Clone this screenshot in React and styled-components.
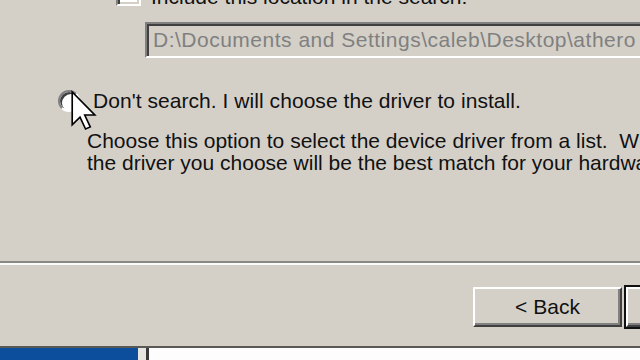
import React from "react";
import styled, { createGlobalStyle } from "styled-components";

const Global = createGlobalStyle`
  html, body { margin: 0; padding: 0; background: #d4d0c8; }
  #root { width: 640px; height: 360px; }
`;

const Page = styled.div`
  position: relative;
  width: 640px;
  height: 360px;
  overflow: hidden;
  display: flex;
  flex-direction: column;
  background: #d4d0c8;
  font-family: "Liberation Sans", Arial, sans-serif;
  font-size: 21px;
  color: #111;
`;

const Dialog = styled.div`
  flex: none;
  height: 346px;
  display: flex;
  flex-direction: column;
  border-bottom: 2px solid #5a5955;
`;

const CheckRow = styled.div`
  display: flex;
  align-items: flex-end;
  gap: 10px;
  height: 25px;
  margin: -19px 0 0 116px;
  white-space: nowrap;
`;

const CheckBox = styled.div`
  flex: none;
  width: 21px;
  height: 21px;
  background: #fff;
  border-top: 2px solid #808080;
  border-left: 2px solid #808080;
  border-right: 2px solid #fff;
  border-bottom: 2px solid #fff;
  box-shadow: inset 2px 2px 0 #404040, inset -2px -2px 0 #d4d0c8;
`;

const CheckLabel = styled.span`
  line-height: 22px;
  margin-bottom: -2px;
`;

const PathField = styled.div`
  flex: none;
  box-sizing: border-box;
  width: 520px;
  height: 36px;
  margin: 16px 0 0 145px;
  padding-left: 6px;
  display: flex;
  align-items: center;
  white-space: nowrap;
  letter-spacing: 0.5px;
  color: #808080;
  background: #d4d0c8;
  border-top: 2px solid #808080;
  border-left: 2px solid #808080;
  border-bottom: 2px solid #fff;
  border-right: 2px solid #fff;
  box-shadow: inset 2px 2px 0 #404040;
`;

const RadioRow = styled.div`
  display: flex;
  align-items: center;
  gap: 13px;
  margin: 32px 0 0 58px;
  height: 22px;
  white-space: nowrap;
`;

const Radio = styled.div`
  flex: none;
  box-sizing: border-box;
  width: 22px;
  height: 22px;
  border-radius: 50%;
  background: #fff;
  border: 2px solid;
  border-color: #808080 #fff #fff #808080;
  box-shadow: inset 2px 2px 0 #404040;
`;

const Label = styled.span`
  line-height: 22px;
  letter-spacing: 0.05px;
`;

const Description = styled.div`
  margin: 18px 0 0 87px;
  line-height: 22px;
  white-space: nowrap;
`;

const Separator = styled.div`
  height: 0;
  margin-top: 87px;
  border-top: 2px solid #8a8984;
  border-bottom: 2px solid #fbfbf9;
`;

const ButtonRow = styled.div`
  display: flex;
  gap: 1px;
  margin-top: 22px;
  padding-left: 473px;
`;

const Button = styled.div`
  flex: none;
  box-sizing: border-box;
  width: 149px;
  height: 40px;
  display: flex;
  align-items: center;
  justify-content: center;
  background: #d4d0c8;
  white-space: nowrap;
  border-top: 2px solid #fff;
  border-left: 2px solid #fff;
  border-right: 2px solid #404040;
  border-bottom: 2px solid #404040;
  box-shadow: inset -2px -2px 0 #808080;
  outline: ${(p) => (p.$default ? "2px solid #111" : "none")};
  outline-offset: 0;
  margin-left: ${(p) => (p.$default ? "3px" : "0")};
`;

const Taskbar = styled.div`
  flex: 1;
  display: flex;
`;

const TaskSegment = styled.div`
  flex: ${(p) => (p.$grow ? 1 : "none")};
  width: ${(p) => p.$w || "auto"};
  background: ${(p) => p.$bg};
`;

const Cursor = styled.svg`
  position: absolute;
  left: 71px;
  top: 91px;
  width: 25px;
  height: 39px;
  overflow: visible;
`;

export default function App() {
  return (
    <Page>
      <Global />
      <Dialog>
        <CheckRow>
          <CheckBox />
          <CheckLabel>Include this location in the search:</CheckLabel>
        </CheckRow>
        <PathField>D:\Documents and Settings\caleb\Desktop\athero</PathField>
        <RadioRow>
          <Radio />
          <Label>Don't search. I will choose the driver to install.</Label>
        </RadioRow>
        <Description>
          Choose this option to select the device driver from a list.&nbsp; Windows does not guarantee that
          <br />
          the driver you choose will be the best match for your hardware.
        </Description>
        <Separator />
        <ButtonRow>
          <Button>&lt; Back</Button>
          <Button $default>Next &gt;</Button>
        </ButtonRow>
      </Dialog>
      <Taskbar>
        <TaskSegment $w="138px" $bg="#0d4e9c" />
        <TaskSegment $w="8px" $bg="#e8e6e0" />
        <TaskSegment $w="3px" $bg="#3a3a3a" />
        <TaskSegment $grow $bg="#fdfdfd" />
      </Taskbar>
      <Cursor viewBox="0 0 12 19">
        <path
          d="M0.5 0.5 L0.5 16.5 L4.3 12.7 L7 18.5 L9.3 17.5 L6.6 11.7 L11.5 11.7 Z"
          fill="#fff"
          stroke="#000"
          strokeWidth="0.8"
          strokeLinejoin="miter"
        />
      </Cursor>
    </Page>
  );
}
